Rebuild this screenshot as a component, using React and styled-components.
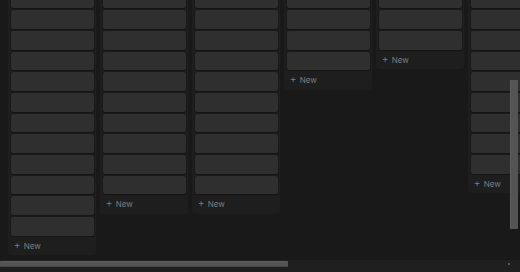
import styled, { createGlobalStyle } from "styled-components";

const columns = [12, 10, 10, 4, 3, 9];

export default function App() {
  return (
    <>
      <Global />
      <Viewport>
        <Board>
          {columns.map((count, i) => (
            <Column key={i}>
              {Array.from({ length: count }).map((_, j) => (
                <Card key={j} />
              ))}
              <NewRow>
                <Plus>+</Plus>
                <span>New</span>
              </NewRow>
            </Column>
          ))}
        </Board>
        <HScroll>
          <HThumb />
        </HScroll>
        <VThumb />
        <Corner />
      </Viewport>
    </>
  );
}

const Global = createGlobalStyle`
  *, *::before, *::after {
    box-sizing: border-box;
  }
  html, body {
    margin: 0;
    padding: 0;
    background: #191919;
  }
  body {
    font-family: Inter, "Noto Sans", sans-serif;
  }
`;

const Viewport = styled.div`
  position: relative;
  width: 520px;
  height: 272px;
  overflow: hidden;
  background: #191919;
`;

const Board = styled.div`
  display: flex;
  align-items: flex-start;
  gap: 4px;
  padding-left: 8px;
  margin-top: -14px;
`;

const Column = styled.div`
  flex: 0 0 88px;
  display: flex;
  flex-direction: column;
  gap: 2px;
  padding: 3.5px 2.5px 1.5px;
  background: #1e1e1e;
  border-radius: 4px;
`;

const Card = styled.div`
  height: 18.7px;
  background: #2f2f2f;
  border-radius: 2px;
  box-shadow: 0 0 0 0.5px rgba(15, 15, 15, 0.4), 0 1px 1px rgba(0, 0, 0, 0.25);
`;

const NewRow = styled.div`
  display: flex;
  align-items: center;
  gap: 3px;
  height: 16px;
  padding-left: 3px;
  font-size: 8px;
  color: #7d7d7d;
`;

const Plus = styled.span`
  font-size: 11px;
  font-weight: 300;
  line-height: 1;
  margin-top: -1px;
`;

const HScroll = styled.div`
  position: absolute;
  left: 0;
  right: 0;
  bottom: 0;
  height: 12px;
  background: #1f1f1f;
`;

const HThumb = styled.div`
  margin-top: 1px;
  width: 288px;
  height: 6px;
  background: #545454;
  border-top: 1px solid #5e5e5e;
  border-bottom: 1px solid #454545;
  border-radius: 1px;
`;

const VThumb = styled.div`
  position: absolute;
  left: 510px;
  top: 80px;
  width: 8px;
  height: 149px;
  background: #545454;
  border-left: 1px solid #5e5e5e;
  border-radius: 1px;
`;

const Corner = styled.div`
  position: absolute;
  left: 508px;
  top: 263px;
  width: 2px;
  height: 2px;
  background: #5a5a5a;
`;
